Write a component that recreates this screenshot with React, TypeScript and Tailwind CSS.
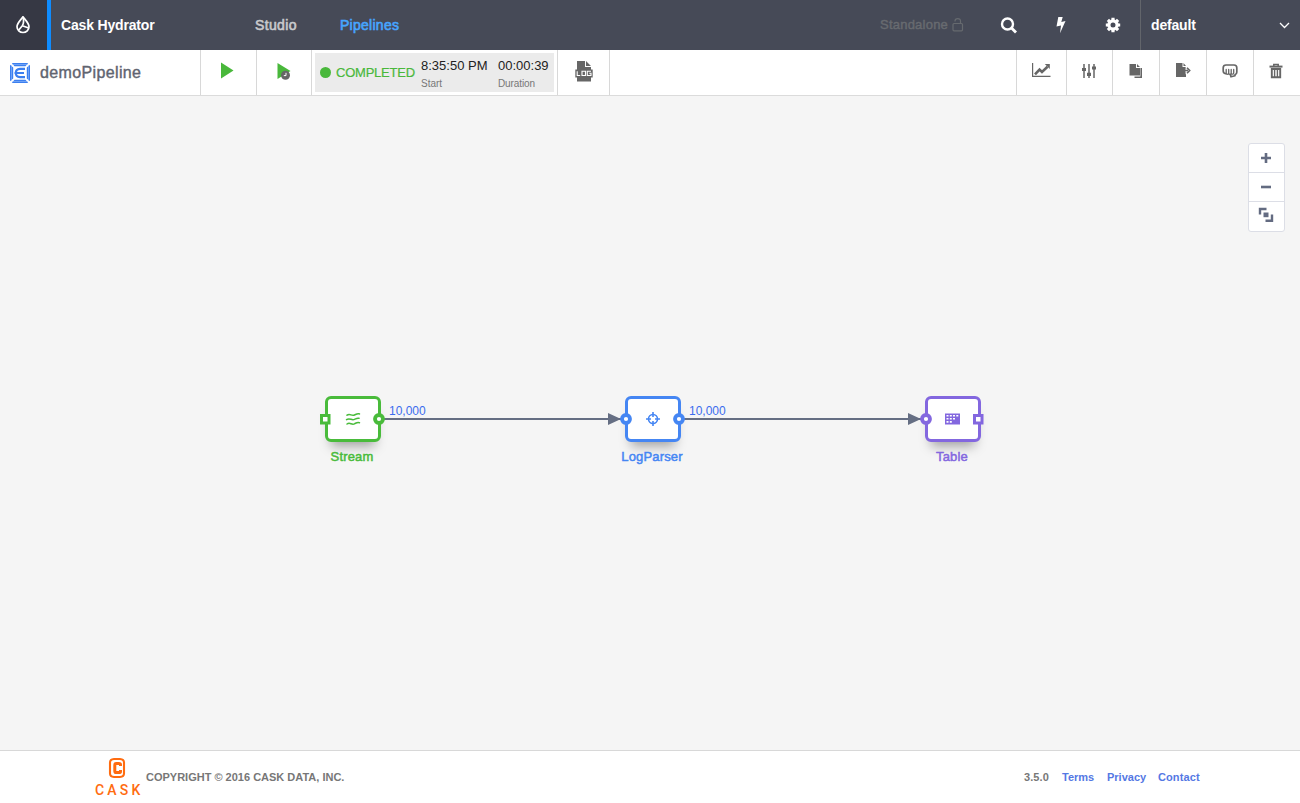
import type { ReactNode } from "react";

const green = "#49bb3b";
const blue = "#4586f3";
const purple = "#8367df";

function DropIcon() {
  return (
    <svg className="mr-px" width="16" height="20" viewBox="0 0 16 20" fill="none" stroke="#fff" strokeWidth="1.7" strokeLinejoin="round" strokeLinecap="round">
      <path d="M8 1.800C6.300 4.500 2 7.800 2 11.800a6 5.700 0 0 0 12 0C14 7.800 9.700 4.500 8 1.800Z" />
      <path d="M8 2.500C9.200 6.500 8.700 8.500 7.300 10.800L4 14.800M7.300 10.800L13 12.800" />
    </svg>
  );
}

function PipelineIcon() {
  return (
    <svg width="22" height="22" viewBox="0 0 22 22">
      <path d="M2.800 1h16.400l-2.700 3.200h-11zM2.800 21h16.400l-2.700-3.200h-11zM1 2.800v16.400l3.200-2.700v-11zM21 2.800v16.400l-3.200-2.700v-11z" fill="#3b7ff0" />
      <path d="M3.500 2.500h15M3.500 19.500h15M2.500 3.500v15M19.500 3.500v15" fill="none" stroke="#86b1f7" strokeWidth=".7" />
      <path d="M16 6.900h-5Q6.800 7.200 6.800 11T11 15.100h5M5.500 11h9.500" fill="none" stroke="#3b7ff0" strokeWidth="2.200" />
    </svg>
  );
}

function LogIcon() {
  return (
    <svg width="18" height="21" viewBox="0 0 18 21">
      <path d="M2 0h8v6h6v3H2zM11 0l5 5h-5zM2 16h14v4.500H2z" fill="#666" />
      <path d="M.3 8.500h17.400v8H.3z" fill="#666" />
      <path d="M2.200 10.300v4.200h3M7 10.300h3.500v4.200H7zM16 10.300h-3.700v4.200H16v-2.200h-1.700" fill="none" stroke="#fff" strokeWidth="1.100" />
    </svg>
  );
}

function ChartIcon() {
  return (
    <svg width="19" height="15" viewBox="0 0 19 15" fill="none" stroke="#666">
      <path d="M.6 0v13.400H18.500" strokeWidth="1.200" />
      <path d="M3 11.300L7.500 6.500l2.500 2.500L15.500 3.800" strokeWidth="2.600" />
      <path d="M12.800 1h5v5z" fill="#666" stroke="none" />
    </svg>
  );
}

function SlidersIcon() {
  return (
    <svg width="14" height="16" viewBox="0 0 14 16" fill="none" stroke="#666">
      <path d="M2 1v14M7 1v14M12 1v14" strokeWidth="1.500" />
      <path d="M0 6.500h4M5 11.300h4M10 5h4" strokeWidth="3.200" />
    </svg>
  );
}

function CopyIcon() {
  return (
    <svg width="14" height="16" viewBox="0 0 14 16">
      <path d="M.5 1H7v4h4v7.500H.5zM8 1l3 3H8z" fill="#666" />
      <path d="M12.200 5v9.200H5.500" fill="none" stroke="#666" strokeWidth="1.600" />
    </svg>
  );
}

function ExportIcon() {
  return (
    <svg width="16" height="16" viewBox="0 0 16 16">
      <path d="M1 1h6.500v4H11v10H1zM8.500 1L11 4H8.500z" fill="#666" />
      <path d="M10 8.500h4M11.300 4.800v7.400" fill="none" stroke="#fff" strokeWidth="1.400" />
      <path d="M8.500 8.500h4.500M12 5.700l2.700 2.800-2.700 2.800" fill="none" stroke="#666" strokeWidth="1.600" />
    </svg>
  );
}

function FistIcon() {
  return (
    <svg width="16" height="14" viewBox="0 0 16 14" fill="none" stroke="#666" strokeWidth="1.700" strokeLinejoin="round" strokeLinecap="round">
      <path d="M3.500 9.700C2 9.500 1.200 8.300 1.200 6.800V3.700C1.200 1.900 2.300 1 4 1h8c1.800 0 2.800 1 2.800 2.700v4.500c0 1.500-.8 2.200-1.800 2.600v1L9 12.800 8.300 10.500" />
      <path d="M4.200 5.500v3.800q0 1 1.100 1T6.700 9.300V5.500M6.700 9.300q0 1 1.200 1T9.200 9.300V5.500M9.200 9.300q0 .9 1.200.9t1.300-1V5.500" strokeWidth="1.300" />
    </svg>
  );
}

function TrashIcon() {
  return (
    <svg width="14" height="16" viewBox="0 0 14 16" fill="none" stroke="#666">
      <path d="M.5 3.600h13" strokeWidth="2" />
      <path d="M4.800 3V1.600h4.400V3" strokeWidth="1.500" />
      <path d="M2.800 6v8.200h8.400V6z" strokeWidth="1.900" />
      <path d="M5.600 6v8M8.400 6v8" strokeWidth="1.400" />
    </svg>
  );
}

function GearIcon() {
  return (
    <svg width="16" height="16" viewBox="0 0 16 16" fill="none" stroke="#fff">
      <circle cx="8" cy="8" r="4.100" strokeWidth="3.200" />
      <path d="M8 .8v2.200M8 13v2.200M.8 8H3M13 8h2.200M2.900 2.900l1.500 1.500M11.600 11.600l1.500 1.500M13.100 2.900l-1.500 1.500M4.400 11.600l-1.500 1.500" strokeWidth="3.200" />
    </svg>
  );
}

function Tool({ children, className }: { children: ReactNode; className: string }) {
  return <button className={`flex h-[45px] shrink-0 justify-center border-l border-[#d8d8d8] ${className}`}>{children}</button>;
}

function Endpoint({ shape, color, className }: { shape: "round" | "square"; color: string; className: string }) {
  return (
    <svg className={`absolute ${className}`} width="12" height="12" viewBox="0 0 12 12">
      {shape === "round" ? (
        <circle cx="6" cy="6" r="4" fill="#fff" stroke={color} strokeWidth="3.800" />
      ) : (
        <rect x="2.500" y="2.500" width="7.500" height="7.500" fill="#fff" stroke={color} strokeWidth="3" />
      )}
    </svg>
  );
}

type NodeProps = {
  label: string;
  color: string;
  place: string;
  border: string;
  labelClass: string;
  left: "round" | "square";
  right: "round" | "square";
  children: ReactNode;
};

function PipelineNode({ label, color, place, border, labelClass, left, right, children }: NodeProps) {
  return (
    <div className={`absolute top-[300px] h-[46px] w-[56px] ${place}`}>
      <div className={`flex h-full w-full items-center justify-center rounded-[6px] border-3 bg-white pr-px pb-px shadow-[0_10px_12px_-6px_rgba(0,0,0,0.35)] ${border}`}>{children}</div>
      <Endpoint shape={left} color={color} className={left === "round" ? "top-[17px] -left-[5px]" : "top-[17px] -left-[6px]"} />
      <Endpoint shape={right} color={color} className={right === "round" ? "top-[17px] left-[48px]" : "top-[17px] left-[47px]"} />
      <div className={`absolute top-[53px] -left-[25px] w-[104px] text-center text-[13px] leading-4 tracking-[0.150px] [-webkit-text-stroke:0.5px] ${labelClass}`}>{label}</div>
    </div>
  );
}

export default function App() {
  return (
    <div className="flex h-[803px] w-[1300px] flex-col overflow-hidden bg-[#f5f5f5] font-['Liberation_Sans',sans-serif]">
      <header className="flex h-[50px] shrink-0 items-center bg-[#464a57] text-[14px] text-white">
        <div className="flex h-full w-[51px] items-center justify-center border-r-4 border-[#0f8cff] bg-[#363844]">
          <DropIcon />
        </div>
        <div className="w-[194px] pl-[10px] font-bold tracking-[-0.170px]">Cask Hydrator</div>
        <nav className="flex grow">
          <a className="w-[85px] pl-[10px] tracking-[0.350px] text-[#c9cacd] [-webkit-text-stroke:0.6px]">Studio</a>
          <a className="pl-[10px] tracking-[0.270px] text-[#46a5ff] [-webkit-text-stroke:0.6px]">Pipelines</a>
        </nav>
        <div className="flex w-[120px] items-center gap-1 text-[13px] text-[#686b70] [-webkit-text-stroke:0.4px]">
          <span className="pl-[2px] tracking-[0.230px]">Standalone</span>
          <svg width="12" height="14" viewBox="0 0 12 14" fill="none" stroke="#666a6f" strokeWidth="1.200">
            <rect x="1" y="5.500" width="9.500" height="7.300" rx="1" />
            <path d="M3 3.500V3A2.700 2.300 0 0 1 8.500 3V5.500" />
          </svg>
        </div>
        <svg className="ml-[2px]" width="18" height="18" viewBox="0 0 18 18" fill="none" stroke="#fff" strokeWidth="2.400">
          <circle cx="7.500" cy="8" r="5.500" />
          <path d="M11.500 12l4.500 4.500" strokeWidth="2.800" />
        </svg>
        <svg className="ml-[37px]" width="12" height="18" viewBox="0 0 12 18" fill="#fff">
          <path d="M3.300 1h4.400L6.300 6l4.200-1L5 17.200 6 9.500l-4.500 1z" />
        </svg>
        <div className="mr-[19px] ml-[38px]"><GearIcon /></div>
        <div className="flex h-full w-[160px] items-center justify-between border-l border-[#62656b] pr-[10px] pl-[10px] font-bold">
          <span className="tracking-[-0.170px]">default</span>
          <svg width="11" height="8" viewBox="0 0 11 8" fill="none" stroke="#fff" strokeWidth="1.300"><path d="M1 2l4.500 4.500L10 2" /></svg>
        </div>
      </header>

      <div className="flex h-[46px] shrink-0 border-b border-[#dbdbdb] bg-white">
        <div className="flex w-[200px] items-center gap-2 pl-[9px] text-[16px] text-[#5f6470]">
          <PipelineIcon />
          <span className="pl-px tracking-[0.370px] [-webkit-text-stroke:0.4px]">demoPipeline</span>
        </div>
        <Tool className="w-[56px] pt-[12px] pr-[3px]">
          <svg width="14" height="18" viewBox="0 0 14 18"><path d="M1 .5L13.500 8.500 1 16.500z" fill="#49b83b" /></svg>
        </Tool>
        <Tool className="w-[55px] pt-[13px]">
          <svg width="14" height="18" viewBox="0 0 14 18">
            <path d="M.5 0L13.500 8 .5 16z" fill="#49b83b" />
            <circle cx="8.500" cy="12.200" r="4.500" fill="#666" />
            <path d="M9 9.800v2.800H6.800" fill="none" stroke="#fff" />
          </svg>
        </Tool>
        <div className="flex h-[45px] w-[246px] border-l border-[#d8d8d8] p-[3px]">
          <div className="flex h-[39px] w-[239px] items-center bg-[#ebebeb] pl-[5px]">
            <span className="h-[11px] w-[11px] rounded-full bg-[#49b83b]" />
            <span className="ml-[5px] w-[85px] text-[13px] tracking-[-0.230px] text-[#49b83b] [-webkit-text-stroke:0.2px]">COMPLETED</span>
            <div className="flex w-[77px] flex-col gap-[3px] pt-[3px]">
              <span className="text-[13px] leading-4 text-[#222]">8:35:50 PM</span>
              <span className="text-[10px] leading-[14px] text-[#777]">Start</span>
            </div>
            <div className="flex flex-col gap-[3px] pt-[3px]">
              <span className="text-[13px] leading-4 text-[#222]">00:00:39</span>
              <span className="text-[10px] leading-[14px] tracking-[-0.100px] text-[#777]">Duration</span>
            </div>
          </div>
        </div>
        <Tool className="w-[52px] pt-[11px]"><LogIcon /></Tool>
        <div className="w-[407px] border-l border-[#d8d8d8]" />
        <Tool className="w-[50px] pt-[13px]"><ChartIcon /></Tool>
        <Tool className="w-[46px] pt-[13px] pr-[2px]"><SlidersIcon /></Tool>
        <Tool className="w-[47px] pt-[13px] pr-px"><CopyIcon /></Tool>
        <Tool className="w-[47px] pt-[12px] pr-px"><ExportIcon /></Tool>
        <Tool className="w-[47px] pt-[14px] pr-px"><FistIcon /></Tool>
        <Tool className="w-[47px] pt-[13px] pr-[2px]"><TrashIcon /></Tool>
      </div>

      <main className="relative h-[654px] shrink-0">
        <svg className="absolute top-[315px] left-[380px]" width="546" height="16" viewBox="0 0 546 16">
          <path d="M0 8H246M300 8H546" stroke="#656e83" strokeWidth="2" />
          <path d="M228 2L241 8 228 14zM528 2L541 8 528 14z" fill="#656e83" />
        </svg>
        <span className="absolute top-[307px] left-[389px] text-[12px] leading-4 text-[#3b6cee]">10,000</span>
        <span className="absolute top-[307px] left-[689px] text-[12px] leading-4 text-[#3b6cee]">10,000</span>

        <PipelineNode label="Stream" color={green} place="left-[325px]" border="border-[#49bb3b]" labelClass="text-[#49bb3b]" left="square" right="round">
          <svg width="16" height="14" viewBox="0 0 16 14" fill="none" stroke={green} strokeWidth="1.500" strokeLinecap="round">
            <path d="M2 3.200C5 1 6.500 4.500 9.500 3S12 1.500 14.500 1.900M1.500 7.600C5 5.400 6.500 8.900 9.500 7.400s2.500-1.500 4.500-1.100M2 12c3-2.200 4.500 1.300 7.500-.2s2.500-1.500 5-1.100" />
          </svg>
        </PipelineNode>
        <PipelineNode label="LogParser" color={blue} place="left-[625px]" border="border-[#4586f3]" labelClass="text-[#4586f3]" left="round" right="round">
          <svg width="14" height="14" viewBox="0 0 14 14" fill="none" stroke={blue} strokeWidth="1.600">
            <circle cx="7" cy="7" r="4.500" />
            <path d="M7 0v5M7 9v5M0 7h5M9 7h5" />
          </svg>
        </PipelineNode>
        <PipelineNode label="Table" color={purple} place="left-[925px]" border="border-[#8367df]" labelClass="text-[#8367df]" left="round" right="square">
          <svg width="15" height="12" viewBox="0 0 15 12">
            <path d="M0 .5h15v11H0z" fill={purple} />
            <path d="M1.500 2h2v1.500h-2zM4.800 2h2v1.500h-2zM8 2h2v1.500H8zM11.300 2h2v1.500h-2zM1.500 5h2v1.500h-2zM4.800 5h2v1.500h-2zM8 5h2v1.500H8zM1.500 8h2v1.800h-2zM4.800 8h2v1.800h-2z" fill="#fff" />
          </svg>
        </PipelineNode>

        <div className="absolute top-[47px] left-[1248px] flex h-[89px] w-[37px] flex-col divide-y divide-[#dcdee6] rounded-[3px] border border-[#dcdee6] bg-white">
          <button className="flex h-[29px] items-center justify-center pr-px pb-px">
            <svg width="10" height="10" viewBox="0 0 10 10" stroke="#636b81" strokeWidth="2.600"><path d="M5 0v10M0 5h10" /></svg>
          </button>
          <button className="flex h-[29px] items-center justify-center pr-px pb-px">
            <svg width="10" height="10" viewBox="0 0 10 10" stroke="#636b81" strokeWidth="2.600"><path d="M0 5h10" /></svg>
          </button>
          <button className="flex h-[29px] justify-center pt-[5px] pr-px">
            <svg width="16" height="16" viewBox="0 0 16 16" fill="none" stroke="#636b81" strokeWidth="2.400">
              <path d="M2 7.500V2h6.500M14 7.500v6.200H7.500" />
              <path d="M5.500 5.500h5v4.700h-5z" fill="#636b81" stroke="none" />
            </svg>
          </button>
        </div>
      </main>

      <footer className="flex h-[53px] shrink-0 items-center border-t border-[#d8d8d8] bg-white text-[11px] font-bold text-[#777]">
        <div className="ml-[94px] flex w-[52px] flex-col items-start">
          <svg className="ml-[14px]" width="18" height="22" viewBox="0 0 18 22" fill="none" stroke="#ff6c10">
            <path d="M6 2h6q4 .3 4 3.500v11q0 3.200-4 3.500H6q-4-.3-4-3.500v-11Q2 2.300 6 2z" strokeWidth="2.100" />
            <path d="M12.500 9V7.500Q12.500 6.400 11 6.400H8Q6.800 6.400 6.800 8v6q0 1.600 1.200 1.600h3q1.500 0 1.500-1.100V13" strokeWidth="3" />
          </svg>
          <span className="mt-[4px] ml-px font-['Roboto',sans-serif] text-[14px] leading-[14px] font-medium tracking-[3.200px] text-[#ff6c10]">CASK</span>
        </div>
        <span className="grow">COPYRIGHT © 2016 CASK DATA, INC.</span>
        <span className="w-[38px] tracking-[0.100px]">3.5.0</span>
        <a className="w-[45px] text-[#5478e4]">Terms</a>
        <a className="w-[51px] text-[#5478e4]">Privacy</a>
        <a className="w-[142px] tracking-[0.100px] text-[#5478e4]">Contact</a>
      </footer>
    </div>
  );
}
